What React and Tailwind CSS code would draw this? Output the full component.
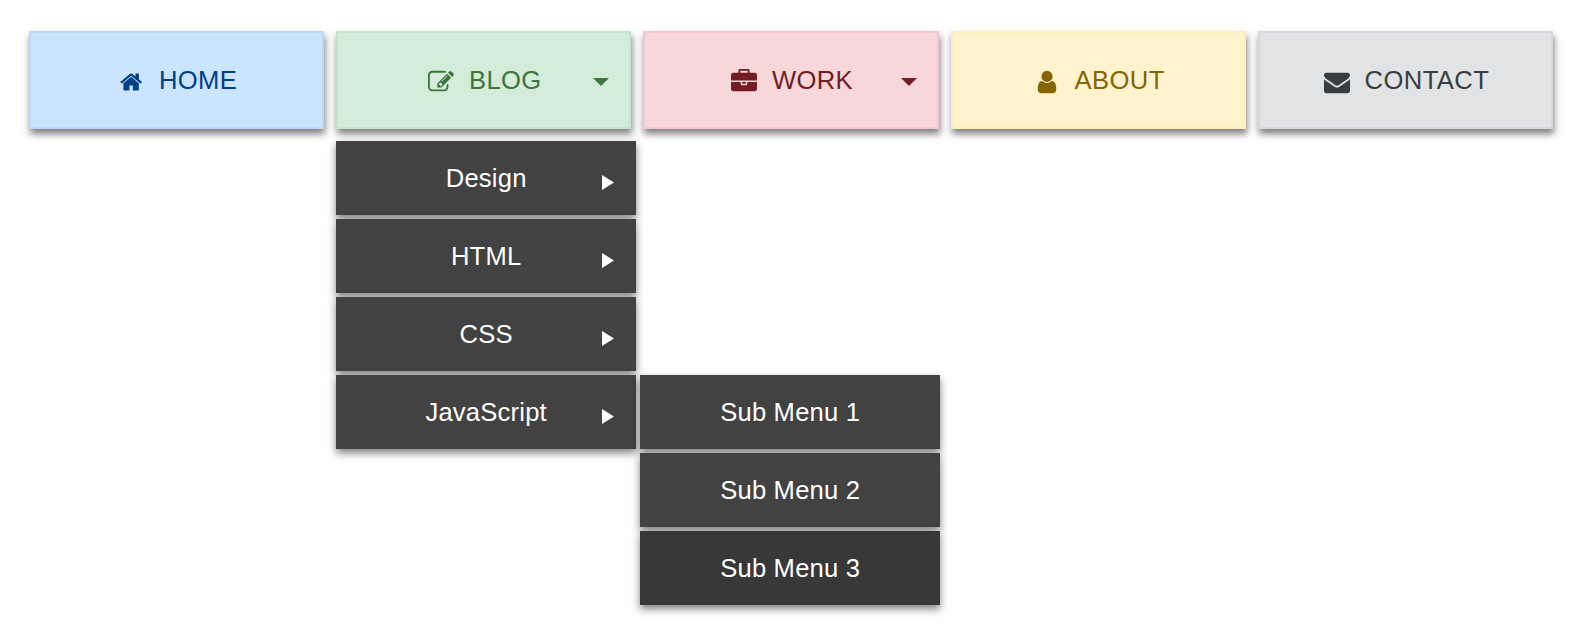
const ICONS = {
  home: "M1408 992v480q0 26-19 45t-45 19h-384v-384h-256v384h-384q-26 0-45-19t-19-45v-480q0-1 .5-3t.5-3l575-474 575 474q1 2 1 6zm223-69l-62 74q-8 9-21 11h-3q-13 0-21-7l-692-577-692 577q-12 8-24 7-13-2-21-11l-62-74q-8-10-7-23.500t11-21.500l719-599q32-26 76-26t76 26l244 204v-195q0-14 9-23t23-9h192q14 0 23 9t9 23v408l219 182q10 8 11 21.500t-7 23.500z",
  edit: "M888 1184l116-116-152-152-116 116v56h96v96h56zm440-720q-16-16-33 1l-350 350q-17 17-1 33t33-1l350-350q17-17 1-33zm80 594v190q0 119-84.500 203.500t-203.500 84.500h-832q-119 0-203.500-84.500t-84.500-203.500v-832q0-119 84.500-203.500t203.500-84.500h832q63 0 117 25 15 7 18 23 3 17-9 29l-49 49q-14 14-32 8-23-6-45-6h-832q-66 0-113 47t-47 113v832q0 66 47 113t113 47h832q66 0 113-47t47-113v-126q0-13 9-22l64-64q15-15 35-7t20 29zm-96-738l288 288-672 672h-288v-288zm444 132l-92 92-288-288 92-92q28-28 68-28t68 28l152 152q28 28 28 68t-28 68z",
  briefcase: "M640 256h512v-128h-512v128zm1152 640v480q0 66-47 113t-113 47h-1472q-66 0-113-47t-47-113v-480h672v160q0 26 19 45t45 19h320q26 0 45-19t19-45v-160h672zm-768 0v128h-256v-128h256zm768-480v384h-1792v-384q0-66 47-113t113-47h352v-160q0-40 28-68t68-28h576q40 0 68 28t28 68v160h352q66 0 113 47t47 113z",
  user: "M1536 1399q0 109-62.500 187t-150.500 78h-854q-88 0-150.500-78t-62.500-187q0-85 8.500-160.500t31.500-152 58.500-131 94-89 134.500-34.500q131 128 313 128t313-128q76 0 134.500 34.500t94 89 58.500 131 31.500 152 8.500 160.500zm-256-887q0 159-112.500 271.500t-271.500 112.500-271.500-112.500-112.500-271.500 112.500-271.500 271.500-112.500 271.500 112.500 112.500 271.500z",
  envelope: "M1792 710v794q0 66-47 113t-113 47h-1472q-66 0-113-47t-47-113v-794q44 49 101 87 362 246 497 345 57 42 92.500 65.500t94.500 48 110 24.500h2q51 0 110-24.500t94.500-48 92.500-65.500q170-123 498-345 57-39 100-87zm0-294q0 79-49 151t-122 123q-376 261-468 325-10 7-42.500 30.500t-54 38-52 32.500-57.500 27-50 9h-2q-23 0-50-9t-57.500-27-52-32.500-54-38-42.500-30.500q-91-64-262-182.500t-205-142.500q-62-42-117-115.500t-55-136.500q0-78 41.500-130t118.500-52h1472q65 0 112.500 47t47.500 113z",
};

const FaIcon = ({ name, className = "w-[26px] h-[26px]" }) => (
  <svg viewBox="0 0 1792 1792" fill="currentColor" className={`shrink-0 translate-y-[2px] ${className}`}>
    <path d={ICONS[name]} />
  </svg>
);

const Caret = ({ className }) => (
  <span
    className={`absolute top-[45px] w-0 h-0 border-x-8 border-t-8 border-x-transparent border-t-current ${className}`}
  />
);

const Arrow = () => (
  <svg viewBox="0 0 12 15" className="absolute right-[22px] top-[34px] w-3 h-[15px] fill-white">
    <polygon points="0,0 12,7.500 0,15" />
  </svg>
);

const MENU = ["Design", "HTML", "CSS", "JavaScript"];
const SUBMENU = ["Sub Menu 1", "Sub Menu 2", "Sub Menu 3"];

const itemClass =
  "relative flex items-center justify-center w-[300px] h-[74px] text-white tracking-[0.2px] shadow-[0_4px_8px_rgba(0,0,0,0.5)]";
const navClass =
  "relative flex items-center justify-center gap-[15px] h-[98px] border-2 tracking-[0.4px] shadow-[1px_5px_7px_rgba(0,0,0,0.5)]";

export default function App() {
  return (
    <div className="min-h-screen bg-white pt-[31px] pl-[29px] pr-[30px] font-['Liberation_Sans',Arial,sans-serif] text-[25.6px]">
      <ul className="grid grid-cols-5 gap-3">
        <li className={`${navClass} pl-1 border-[#b8daff] bg-[#cce5ff] text-[#004085]`}>
          <FaIcon name="home" className="w-6 h-6" />
          <span>HOME</span>
        </li>

        <li className={`${navClass} pl-[2px] border-[#c3e6cb] bg-[#d4edda] text-[#3c763d]`}>
          <FaIcon name="edit" />
          <span>BLOG</span>
          <Caret className="right-5" />
          <ul className="absolute left-[-2px] top-[108px] z-10 flex flex-col gap-1">
            {MENU.map((label) => (
              <li key={label} className={`${itemClass} bg-[#424242]`}>
                <span>{label}</span>
                <Arrow />
                {label === "JavaScript" && (
                  <ul className="absolute left-[304px] top-0 flex flex-col gap-1">
                    {SUBMENU.map((sub, i) => (
                      <li
                        key={sub}
                        className={`${itemClass} ${i === 2 ? "bg-[#383838]" : "bg-[#424242]"}`}
                      >
                        <span>{sub}</span>
                      </li>
                    ))}
                  </ul>
                )}
              </li>
            ))}
          </ul>
        </li>

        <li className={`${navClass} pl-[2px] border-[#f5c6cb] bg-[#f8d7da] text-[#721c24]`}>
          <FaIcon name="briefcase" />
          <span>WORK</span>
          <Caret className="right-5" />
        </li>

        <li className={`${navClass} pl-[2px] border-[#ffeeba] bg-[#fff3cd] text-[#856404]`}>
          <FaIcon name="user" />
          <span>ABOUT</span>
        </li>

        <li className={`${navClass} pl-[2px] border-[#d6d8db] bg-[#e2e3e5] text-[#383d41]`}>
          <FaIcon name="envelope" />
          <span>CONTACT</span>
        </li>
      </ul>
    </div>
  );
}
